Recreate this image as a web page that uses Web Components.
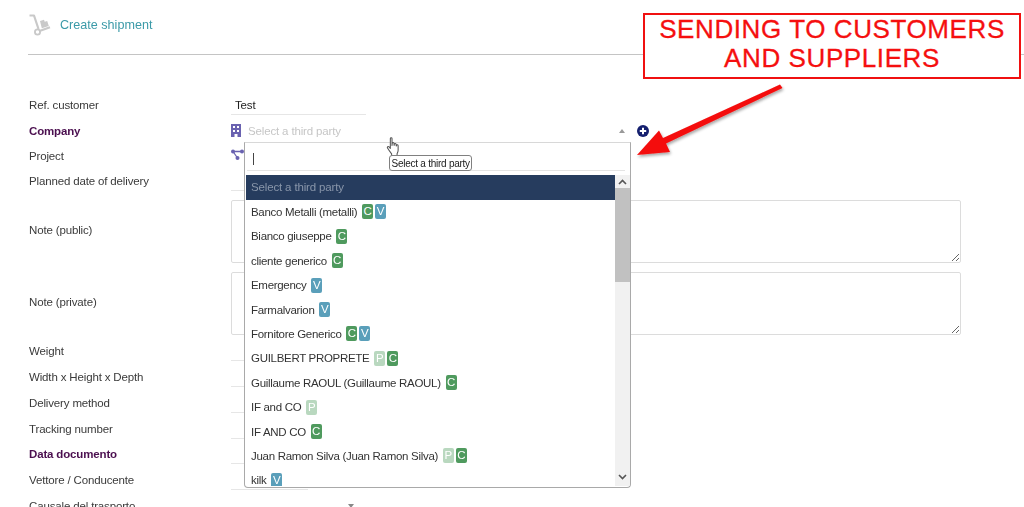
<!DOCTYPE html>
<html>
<head>
<meta charset="utf-8">
<title>Create shipment</title>
<style>
  html, body { margin: 0; height: 507px; overflow: hidden; background: #fff; }
  body { font: 11.5px "Liberation Sans", Arial, sans-serif; letter-spacing: -.15px; color: #333; }
</style>
</head>
<body>
<shipment-page>
  <page-head slot="head">Create shipment</page-head>

  <form-row h="26"><span slot="label">Ref. customer</span><line-field w="135" value="Test"></line-field></form-row>
  <form-row h="25" required>
    <span slot="label">Company</span>
    <company-select></company-select>
  </form-row>
  <form-row h="25"><span slot="label">Project</span><project-icon></project-icon></form-row>
  <form-row h="26"><span slot="label">Planned date of delivery</span><line-field w="135"></line-field></form-row>
  <form-row h="72"><span slot="label">Note (public)</span><note-area></note-area></form-row>
  <form-row h="72"><span slot="label">Note (private)</span><note-area></note-area></form-row>
  <form-row h="26"><span slot="label">Weight</span><line-field w="77"></line-field></form-row>
  <form-row h="26"><span slot="label">Width x Height x Depth</span><line-field w="77"></line-field></form-row>
  <form-row h="26"><span slot="label">Delivery method</span><line-field w="77"></line-field></form-row>
  <form-row h="25"><span slot="label">Tracking number</span><line-field w="77"></line-field></form-row>
  <form-row h="26" required><span slot="label">Data documento</span><line-field w="77"></line-field></form-row>
  <form-row h="26"><span slot="label">Vettore / Conducente</span><line-field w="77"></line-field></form-row>
  <form-row h="26"><span slot="label">Causale del trasporto</span><caret-field></caret-field></form-row>

  <party-dropdown slot="overlay">
    <party-option>Banco Metalli (metalli) <party-badge kind="C"></party-badge><party-badge kind="V"></party-badge></party-option>
    <party-option>Bianco giuseppe <party-badge kind="C"></party-badge></party-option>
    <party-option>cliente generico <party-badge kind="C"></party-badge></party-option>
    <party-option>Emergency <party-badge kind="V"></party-badge></party-option>
    <party-option>Farmalvarion <party-badge kind="V"></party-badge></party-option>
    <party-option>Fornitore Generico <party-badge kind="C"></party-badge><party-badge kind="V"></party-badge></party-option>
    <party-option>GUILBERT PROPRETE <party-badge kind="P"></party-badge><party-badge kind="C"></party-badge></party-option>
    <party-option>Guillaume RAOUL (Guillaume RAOUL) <party-badge kind="C"></party-badge></party-option>
    <party-option>IF and CO <party-badge kind="P"></party-badge></party-option>
    <party-option>IF AND CO <party-badge kind="C"></party-badge></party-option>
    <party-option>Juan Ramon Silva (Juan Ramon Silva) <party-badge kind="P"></party-badge><party-badge kind="C"></party-badge></party-option>
    <party-option>kilk <party-badge kind="V"></party-badge></party-option>
  </party-dropdown>
  <hand-tip slot="overlay">Select a third party</hand-tip>
  <callout-note slot="overlay"></callout-note>
</shipment-page>

<script>
class ShipmentPage extends HTMLElement {
  connectedCallback() {
    this.attachShadow({ mode: "open" });
    this.shadowRoot.innerHTML = `
      <style>
        :host { display: block; position: relative; height: 507px; overflow: hidden; filter: blur(.3px); }
        .rows { display: flex; flex-direction: column; padding-top: 37px; }
      </style>
      <slot name="head"></slot>
      <div class="rows"><slot></slot></div>
      <slot name="overlay"></slot>
    `;
  }
}

class PageHead extends HTMLElement {
  connectedCallback() {
    this.attachShadow({ mode: "open" });
    this.shadowRoot.innerHTML = `
      <style>
        :host { display: flex; align-items: center; gap: 9px; height: 55px; margin-left: 28px;
                padding-left: 1px; padding-bottom: 4px; box-sizing: border-box;
                border-bottom: 1px solid #c4c4c4; letter-spacing: 0; }
        .title { color: #3b9aa8; font-size: 12.600px; }
        svg { display: block; }
      </style>
      <svg width="22" height="22" viewBox="0 0 22 22" fill="none">
        <path d="M.5 1.500h4.500l4.500 13.500" stroke="#c9c9c9" stroke-width="2.200" stroke-linejoin="round"/>
        <circle cx="8.500" cy="18" r="2.600" stroke="#c9c9c9" stroke-width="1.800"/>
        <path d="M10.500 17l10.500-3.800" stroke="#c9c9c9" stroke-width="2.200"/>
        <path d="M11 7l4-1.200 .7 2 2.500-.8 1.600 5-7 2.200z" fill="#c9c9c9"/>
      </svg>
      <span class="title"><slot></slot></span>
    `;
  }
}

class FormRow extends HTMLElement {
  connectedCallback() {
    this.attachShadow({ mode: "open" });
    const h = this.getAttribute("h") || 26;
    const req = this.hasAttribute("required");
    this.shadowRoot.innerHTML = `
      <style>
        :host { display: grid; grid-template-columns: 231px 1fr; height: ${h}px; align-items: center; }
        .lab { padding-left: 29px; color: ${req ? "#4b0f4f" : "#3a3a3a"}; font-weight: ${req ? "bold" : "normal"}; }
        .val { height: 100%; display: flex; align-items: stretch; min-width: 0; }
      </style>
      <div class="lab"><slot name="label"></slot></div>
      <div class="val"><slot></slot></div>
    `;
  }
}

class LineField extends HTMLElement {
  connectedCallback() {
    this.attachShadow({ mode: "open" });
    const w = this.getAttribute("w") || 135;
    const value = this.getAttribute("value") || "";
    this.shadowRoot.innerHTML = `
      <style>
        :host { display: block; width: ${w}px; height: 16px; margin-top: 7px; padding-left: 4px;
                box-sizing: border-box; border-bottom: 1px solid #e6e6e6; color: #222; line-height: 12px; }
      </style>
      ${value}
    `;
  }
}

class CompanySelect extends HTMLElement {
  connectedCallback() {
    this.attachShadow({ mode: "open" });
    this.shadowRoot.innerHTML = `
      <style>
        :host { display: flex; align-items: center; width: 418px; }
        svg { display: block; flex: none; }
        .ph { color: #c6c6c6; margin-left: 7px; flex: 1; }
        .up { width: 0; height: 0; border: 3px solid transparent; border-top: 0; border-bottom: 4px solid #999;
              margin-right: 12px; }
      </style>
      <svg width="10" height="13" viewBox="0 0 10 13" style="margin-top:-1px">
        <path fill="#6a62b0" fill-rule="evenodd" d="M0 0h10v13H6.500v-3h-3v3H0zM2 2v2h2V2zm4 0v2h2V2zM2 6v2h2V6zm4 0v2h2V6z"/>
      </svg>
      <span class="ph">Select a third party</span>
      <span class="up"></span>
      <svg width="12" height="12" viewBox="0 0 12 12">
        <circle cx="6" cy="6" r="6" fill="#15206f"/>
        <path d="M6 2.800v6.400M2.800 6h6.400" stroke="#fff" stroke-width="2"/>
      </svg>
    `;
  }
}

class ProjectIcon extends HTMLElement {
  connectedCallback() {
    this.attachShadow({ mode: "open" });
    this.shadowRoot.innerHTML = `
      <style>
        :host { display: flex; align-items: center; }
        svg { display: block; margin-top: -2px; }
      </style>
      <svg width="13" height="11" viewBox="0 0 13 11">
        <path d="M2 2.500h9M2 2.500L6.500 9" stroke="#6a62b0" stroke-width="1.300" fill="none"/>
        <circle cx="2" cy="2.500" r="2" fill="#6a62b0"/>
        <circle cx="11" cy="2.500" r="2" fill="#6a62b0"/>
        <circle cx="6.500" cy="9" r="2" fill="#6a62b0"/>
      </svg>
    `;
  }
}

class NoteArea extends HTMLElement {
  connectedCallback() {
    this.attachShadow({ mode: "open" });
    this.shadowRoot.innerHTML = `
      <style>
        :host { display: flex; align-items: center; width: 730px; box-sizing: border-box; padding-top: 2px; }
        textarea { width: 730px; height: 63px; box-sizing: border-box; margin: 0; border: 1px solid #dcdcdc;
                   border-radius: 2px; outline: 0; background: #fff; resize: vertical; }
      </style>
      <textarea></textarea>
    `;
  }
}

class CaretField extends HTMLElement {
  connectedCallback() {
    this.attachShadow({ mode: "open" });
    this.shadowRoot.innerHTML = `
      <style>
        :host { display: flex; align-items: center; justify-content: flex-end; width: 123px; }
        i { width: 0; height: 0; border: 3px solid transparent; border-bottom: 0; border-top: 4px solid #888; }
      </style>
      <i></i>
    `;
  }
}

class PartyDropdown extends HTMLElement {
  connectedCallback() {
    this.attachShadow({ mode: "open" });
    this.shadowRoot.innerHTML = `
      <style>
        :host { display: block; position: absolute; left: 244px; top: 142px; width: 387px; height: 346px;
                box-sizing: border-box; background: #fff; border: 1px solid #a9a9a9; border-top-color: #d8d8d8;
                border-radius: 0 0 4px 4px; overflow: hidden; }
        .search { height: 28px; margin: 0 5px 0 2px; border-bottom: 1px solid #e4e4e4; display: flex; align-items: center;
                  padding: 4px 0 0 6px; box-sizing: border-box; }
        .search i { display: block; width: 1px; height: 12px; background: #444; }
        .body { display: flex; margin: 4px 0 0 1px; height: 311px; }
        .list { width: 369px; overflow: hidden; }
        .head { height: 25px; line-height: 25px; background: #263c5e; color: #8996aa; padding-left: 5px; }
        .opts { display: flex; flex-direction: column; }
        .bar { width: 15px; display: flex; flex-direction: column; background: #f1f1f1; }
        .arr { height: 13px; display: flex; align-items: center; justify-content: center; flex: none; }
        .thumb { height: 94px; background: #c1c1c1; flex: none; }
        .gap { flex: 1; }
      </style>
      <div class="search"><i></i></div>
      <div class="body">
        <div class="list">
          <div class="head">Select a third party</div>
          <div class="opts"><slot></slot></div>
        </div>
        <div class="bar">
          <div class="arr"><svg width="9" height="6" viewBox="0 0 9 6"><path d="M1 5l3.500-3.500L8 5" fill="none" stroke="#555" stroke-width="1.600"/></svg></div>
          <div class="thumb"></div>
          <div class="gap"></div>
          <div class="arr" style="height:19px"><svg width="9" height="6" viewBox="0 0 9 6"><path d="M1 1l3.500 3.500L8 1" fill="none" stroke="#555" stroke-width="1.600"/></svg></div>
        </div>
      </div>
    `;
  }
}

class PartyOption extends HTMLElement {
  connectedCallback() {
    this.attachShadow({ mode: "open" });
    this.shadowRoot.innerHTML = `
      <style>
        :host { display: block; height: 24.400px; line-height: 24.400px; flex: none; padding-left: 5px;
                color: #333; white-space: nowrap; letter-spacing: -.3px; }
      </style>
      <slot></slot>
    `;
  }
}

const BADGE_COLORS = { C: "#4f9a5e", V: "#5a9fba", P: "#b9d8bf" };

class PartyBadge extends HTMLElement {
  connectedCallback() {
    this.attachShadow({ mode: "open" });
    const kind = this.getAttribute("kind");
    this.shadowRoot.innerHTML = `
      <style>
        :host { display: inline-block; width: 11px; height: 15px; line-height: 15px; margin-left: 2px;
                border-radius: 2px; text-align: center; color: #fff; background: ${BADGE_COLORS[kind]};
                font-size: 11.500px; letter-spacing: 0; vertical-align: middle; position: relative; top: -1px; }
      </style>${kind}`;
  }
}

class HandTip extends HTMLElement {
  connectedCallback() {
    this.attachShadow({ mode: "open" });
    this.shadowRoot.innerHTML = `
      <style>
        :host { display: block; position: absolute; left: 386px; top: 137px; width: 86px; height: 35px; }
        svg { position: absolute; left: 0; top: 0; }
        .tip { position: absolute; left: 3px; top: 18px; height: 16px; line-height: 15px; box-sizing: border-box;
               padding: 0 1.500px; background: #fff; border: 1px solid #808080; border-radius: 3px;
               font-size: 10px; letter-spacing: -.25px; color: #222; white-space: nowrap; }
      </style>
      <svg width="15" height="20" viewBox="0 0 14 19">
        <path d="M4 1.500c0-1 1.600-1 1.600 0V8l.2-2c.2-1 1.600-1 1.700.2l.1 1.800.2-1.200c.2-1 1.600-.9 1.700.2l.1 1.600.3-.8c.3-.8 1.500-.6 1.500.4v4.300c0 1.500-.5 2.500-1 3.500v1.500H5.200v-1.500C4 14.500 2.500 12.500 1.300 10.500c-.6-1 .6-2 1.500-1.100L4 10.800z"
              fill="#fff" stroke="#555" stroke-width="1" stroke-linejoin="round"/>
      </svg>
      <div class="tip"><slot></slot></div>
    `;
  }
}

class CalloutNote extends HTMLElement {
  connectedCallback() {
    this.attachShadow({ mode: "open" });
    this.shadowRoot.innerHTML = `
      <style>
        :host { display: block; position: absolute; left: 0; top: 0; width: 1024px; height: 507px; pointer-events: none; }
        .box { position: absolute; left: 643px; top: 13px; width: 378px; height: 66px; box-sizing: border-box;
               border: 2px solid #f01010; background: #fff; color: #f50f0f; text-align: center;
               font-size: 26px; line-height: 29px; letter-spacing: .6px; -webkit-text-stroke: .3px #f50f0f; }
        svg { position: absolute; left: 630px; top: 80px; overflow: visible; }
      </style>
      <div class="box">SENDING TO CUSTOMERS<br>AND SUPPLIERS</div>
      <svg width="160" height="80" viewBox="630 80 160 80">
        <defs><filter id="s" x="-20%" y="-20%" width="140%" height="150%"><feDropShadow dx="1" dy="2" stdDeviation="1.500" flood-color="#000" flood-opacity=".35"/></filter></defs>
        <path filter="url(#s)" fill="#f40d0d" d="M780 84.500L782.500 88 666 143.500 670 152 637 155 659 130.500 663 138z"/>
      </svg>
    `;
  }
}

customElements.define("shipment-page", ShipmentPage);
customElements.define("page-head", PageHead);
customElements.define("form-row", FormRow);
customElements.define("line-field", LineField);
customElements.define("company-select", CompanySelect);
customElements.define("project-icon", ProjectIcon);
customElements.define("note-area", NoteArea);
customElements.define("caret-field", CaretField);
customElements.define("party-dropdown", PartyDropdown);
customElements.define("party-option", PartyOption);
customElements.define("party-badge", PartyBadge);
customElements.define("hand-tip", HandTip);
customElements.define("callout-note", CalloutNote);
</script>
</body>
</html>
